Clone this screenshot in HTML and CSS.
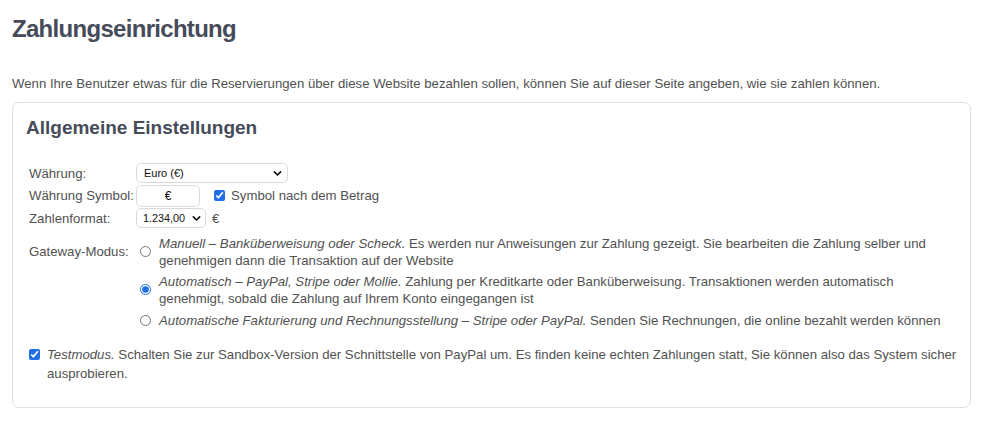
FILE: index.html
```html
<!DOCTYPE html>
<html lang="de">
<head>
<meta charset="utf-8">
<title>Zahlungseinrichtung</title>
<link rel="stylesheet" href="styles.css">
</head>
<body>
<div class="page">
  <h1 class="title">Zahlungseinrichtung</h1>
  <p class="intro">Wenn Ihre Benutzer etwas für die Reservierungen über diese Website bezahlen sollen, können Sie auf dieser Seite angeben, wie sie zahlen können.</p>
  <section class="card">
    <h2 class="card-title">Allgemeine Einstellungen</h2>
    <div class="form">
      <div class="row">
        <label class="label">Währung:</label>
        <div class="control">
          <span class="select-wrap wide">
            <select class="select"><option>Euro (€)</option></select>
            <svg class="chev" viewBox="0 0 10 10" width="9" height="9"><path d="M1.5 3.2 L5 6.7 L8.5 3.2" fill="none" stroke="#111" stroke-width="1.8" stroke-linecap="round" stroke-linejoin="round"/></svg>
          </span>
        </div>
      </div>
      <div class="row">
        <label class="label">Währung Symbol:</label>
        <div class="control">
          <input class="text-input" type="text" value="€">
          <label class="check-label"><input class="check" type="checkbox" checked> Symbol nach dem Betrag</label>
        </div>
      </div>
      <div class="row">
        <label class="label">Zahlenformat:</label>
        <div class="control">
          <span class="select-wrap narrow">
            <select class="select"><option>1.234,00</option></select>
            <svg class="chev" viewBox="0 0 10 10" width="9" height="9"><path d="M1.5 3.2 L5 6.7 L8.5 3.2" fill="none" stroke="#111" stroke-width="1.8" stroke-linecap="round" stroke-linejoin="round"/></svg>
          </span>
          <span class="suffix">€</span>
        </div>
      </div>
      <div class="row gateway">
        <label class="label">Gateway-Modus:</label>
        <div class="options">
          <label class="option"><input class="radio" type="radio" name="gw"><span><em>Manuell – Banküberweisung oder Scheck.</em> Es werden nur Anweisungen zur Zahlung gezeigt. Sie bearbeiten die Zahlung selber und genehmigen dann die Transaktion auf der Website</span></label>
          <label class="option"><input class="radio" type="radio" name="gw" checked><span><em>Automatisch – PayPal, Stripe oder Mollie.</em> Zahlung per Kreditkarte oder Banküberweisung. Transaktionen werden automatisch genehmigt, sobald die Zahlung auf Ihrem Konto eingegangen ist</span></label>
          <label class="option"><input class="radio" type="radio" name="gw"><span><em>Automatische Fakturierung und Rechnungsstellung – Stripe oder PayPal.</em> Senden Sie Rechnungen, die online bezahlt werden können</span></label>
        </div>
      </div>
    </div>
    <label class="testmode"><input class="check" type="checkbox" checked><span><em>Testmodus.</em> Schalten Sie zur Sandbox-Version der Schnittstelle von PayPal um. Es finden keine echten Zahlungen statt, Sie können also das System sicher ausprobieren.</span></label>
  </section>
</div>
</body>
</html>
```
FILE: styles.css
```css
* { box-sizing: border-box; }
html, body { margin: 0; padding: 0; background: #fff; }
body {
  font-family: "Liberation Sans", Arial, Helvetica, sans-serif;
  font-size: 13.2px;
  color: #515151;
}
.page { padding: 14px 13px 0 12px; }
.title {
  margin: 0;
  font-size: 24px;
  line-height: 30px;
  font-weight: 700;
  letter-spacing: -0.7px;
  color: #464b59;
}
.intro {
  margin: 31px 0 0 0;
  line-height: 18px;
}
.card {
  margin-top: 9px;
  border: 1px solid #dedede;
  border-radius: 7px;
  padding: 13px 10px 24px 16px;
}
.card-title {
  margin: 0 0 22px -3px;
  font-size: 19px;
  line-height: 24px;
  font-weight: 700;
  color: #464b59;
}
.form { display: flex; flex-direction: column; }
.row { display: flex; align-items: center; min-height: 22.5px; }
.label { width: 107px; flex: none; }
.control { display: flex; align-items: center; }
.select-wrap { position: relative; display: inline-block; height: 20px; }
.select-wrap.wide { width: 152px; }
.select-wrap.narrow { width: 70px; }
.select {
  appearance: none;
  -webkit-appearance: none;
  width: 100%;
  height: 20px;
  border: 1px solid #d9d9d9;
  border-radius: 5px;
  background: #fff;
  font-family: "Liberation Sans", Arial, sans-serif;
  font-size: 11px;
  color: #111;
  padding: 0 16px 0 7px;
  margin: 0;
}
.narrow .select { padding-left: 6px; font-size: 10.8px; }
.chev { position: absolute; right: 6px; top: 6px; pointer-events: none; }
.narrow .chev { right: 5px; }
.text-input {
  width: 64px;
  height: 22px;
  border: 1px solid #dcdcdc;
  border-radius: 5px;
  text-align: center;
  font-family: "Liberation Sans", Arial, sans-serif;
  font-size: 12px;
  color: #111;
  padding: 0;
  margin: 0;
}
.check-label { display: inline-flex; align-items: center; margin-left: 14px; }
.check {
  width: 11px;
  height: 11px;
  margin: 0 6px 0 0;
  accent-color: #1f6fe5;
}
.suffix { margin-left: 6px; }
.row.gateway { margin-top: 5px; align-items: flex-start; }
.gateway .label { line-height: 17px; padding-top: 8px; }
.options { display: flex; flex-direction: column; gap: 5px; flex: 1; }
.option { display: flex; align-items: center; line-height: 17px; }
.option + .option { margin-top: -1px; }
.option:last-child { margin-top: 0; }
.radio {
  width: 11px;
  height: 11px;
  margin: 0 8px 0 4px;
  flex: none;
  accent-color: #1f6fe5;
}
em { font-style: italic; }
.testmode {
  display: flex;
  align-items: flex-start;
  margin-top: 16px;
  line-height: 19px;
}
.testmode .check { margin: 4px 7px 0 0; flex: none; }
```
